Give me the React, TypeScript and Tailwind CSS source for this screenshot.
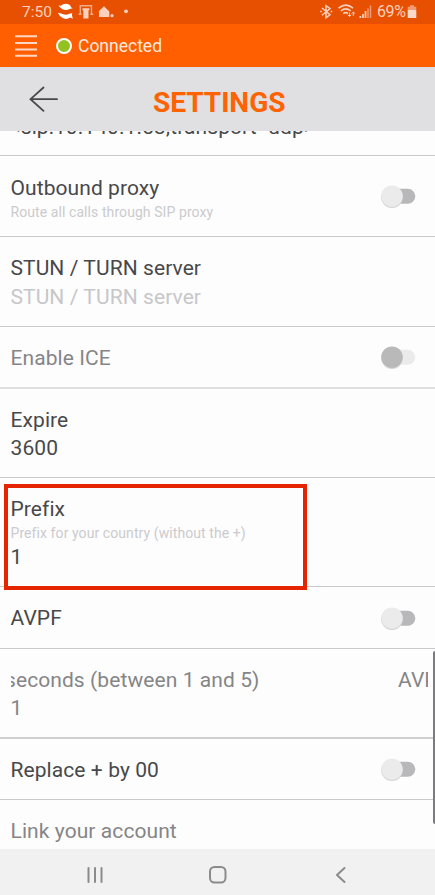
import type { ReactNode } from "react";

function Switch({ disabled = false }: { disabled?: boolean }) {
  return (
    <svg width="38" height="26" viewBox="0 0 38 26" className="shrink-0">
      <rect x="6" y="5.8" width="30.3" height="15" rx="7.5" fill={disabled ? "#ebebeb" : "#b8b8ba"} />
      <circle cx="13" cy="14.1" r="10.9" fill={disabled ? "#d6d6d6" : "#d2d2d2"} />
      <circle cx="13" cy="13.1" r="10.7" fill={disabled ? "#b9b9b9" : "#ebebeb"} />
    </svg>
  );
}

type RowProps = { height: string; border?: string; pad?: string; control?: ReactNode; children: ReactNode };

function Row({ height, border = "border-b border-[#c9c9cb]", pad = "pt-[17px]", control, children }: RowProps) {
  return (
    <div className={`flex shrink-0 justify-between pl-[10.5px] ${height} ${border}`}>
      <div className={`whitespace-nowrap ${pad}`}>{children}</div>
      {control && <div className="flex items-center pr-[18px]">{control}</div>}
    </div>
  );
}

const line = "text-[21px] leading-[28px] tracking-[0.08px]";
const dark = "text-[#48484a]";
const grey = "text-[#858587]";
const hint = "text-[14px] leading-[20px] tracking-[0.08px] text-[#cbcbcd]";

export default function App() {
  return (
    <div className="flex h-[895px] w-[435px] flex-col overflow-hidden bg-[#fdfdfd] font-['Roboto',sans-serif]">
      <div className="flex h-6 shrink-0 items-center justify-between bg-[#e65000] text-[#fbd0bd]">
        <div className="flex items-center pl-[22px]">
          <span className="w-[35px] text-[15.5px] leading-6">7:50</span>
          <svg width="75" height="24" viewBox="57 0 75 24">
            <path d="M58.500 5.500l2.200.3Q64.800 2.300 69 4.600q1.800 1 2.200 2.900l1.500.8-3 .6q-3.600 2.200-7.600.1Q60 7.700 58.500 5.500z" fill="#fff" />
            <path d="M57.800 12.800l3.400.8q4.300 2 8.300.1l2.800-.7-.4 1.800.9 4-2.700-1.200q-4.100 2.800-8.600-.3-1.800-1.200-3.700-4.500z" fill="#fff" />
            <path d="M78.500 14.200h3M80.300 14V5.800h11.200V14M90.300 14.200h3" fill="none" stroke="#f7ac8b" strokeWidth="1.400" />
            <path d="M82.500 8.300h6.800v2h-.8V18.500h-5.200V10.300h-.8z" fill="#fbd0bd" />
            <path d="M98.500 11.400l5.500-5.200 5.300 5.200v5.700h-10.300v-5.700z" fill="#fbd0bd" />
            <circle cx="112" cy="15.700" r="1.600" fill="#fbd0bd" />
            <circle cx="126" cy="11.300" r="1.900" fill="#fbd0bd" />
          </svg>
        </div>
        <div className="flex items-center pr-[18px]">
          <svg width="58" height="24" viewBox="319 0 58 24" fill="none" stroke="#fbd0bd">
            <path d="M322 8l8 6.800-4 2.900V5.600l4 2.900-8 6.800M320.200 11.600h1.600M330.600 11.600h1.600" strokeWidth="1.500" />
            <path d="M338.600 8.200q7.200-6 14.400 0M340.900 11q4.900-4.100 9.900 0M343.300 13.700q2.500-2 4.700-.2" strokeWidth="1.600" />
            <path d="M349.500 12.500v4m-1.700-1.700l1.700 1.800 1.700-1.800M353.300 16v-4m-1.600 1.700l1.600-1.800 1.600 1.800" strokeWidth="1" />
            <path d="M360.400 18v-2M363 18v-4M365.500 18v-7" strokeWidth="1.700" />
            <path d="M368 18V8.500M370.500 18V5.500" stroke="#f29b73" strokeWidth="1.500" />
          </svg>
          <span className="w-[30px] whitespace-nowrap text-[16px] leading-6 tracking-[-0.4px]">69%</span>
          <svg width="10" height="24" viewBox="0 0 10 24">
            <path d="M3 5.300h4v1.500h2.300V10H.700V6.800H3z" fill="#f29b73" />
            <path d="M.700 10h8.600v8H.700z" fill="#fbd9ca" />
          </svg>
        </div>
      </div>

      <div className="flex h-[43px] shrink-0 items-center bg-[#ff5f00] pl-[15px]">
        <svg width="22" height="24" viewBox="0 0 22 24" stroke="#fcd7c5" strokeWidth="1.900">
          <path d="M0 2.200h22M0 9h22M0 15.500h22M0 21.800h22" />
        </svg>
        <div className="ml-[19px] size-[16px] rounded-full border-2 border-white bg-[#93c11f]" />
        <span className="ml-[6px] mt-[1px] text-[17.500px] leading-[24px] text-[#ffe9df]">Connected</span>
      </div>

      <div className="flex h-16 shrink-0 items-center bg-[#e0e0e2] pl-[29px]">
        <svg width="30" height="26" viewBox="0 0 30 26" fill="none" stroke="#48484a" strokeWidth="1.800" strokeLinecap="round">
          <path d="M14.500 1.500L1.500 13.200l13 11.600M1.500 13.200H28" />
        </svg>
        <h1 className="ml-[94px] mt-[8px] text-[28px] font-bold leading-8 text-[#ff6200]">SETTINGS</h1>
      </div>

      <main className="relative flex h-[718px] shrink-0 flex-col overflow-hidden">
        <div className="flex h-[25px] shrink-0 items-start overflow-hidden border-b border-[#c9c9cb] pl-[10px]">
          <span className={`-mt-[18px] whitespace-nowrap ${line} ${dark}`}>&lt;sip:10.140.1.53;transport=udp&gt;</span>
        </div>
        <Row height="h-[81px]" pad="pt-[18px]" control={<Switch />}>
          <p className={`${line} ${dark}`}>Outbound proxy</p>
          <p className={hint}>Route all calls through SIP proxy</p>
        </Row>
        <Row height="h-[90px]">
          <p className={`${line} ${dark}`}>STUN / TURN server</p>
          <p className={`mt-px ${line} text-[#c7c7c9]`}>STUN / TURN server</p>
        </Row>
        <Row height="h-[62px]" border="border-b-2 border-[#dfdfe0]" control={<Switch disabled />}>
          <p className={`${line} ${grey}`}>Enable ICE</p>
        </Row>
        <Row height="h-[89px]">
          <p className={`${line} ${dark}`}>Expire</p>
          <p className={`${line} ${dark}`}>3600</p>
        </Row>
        <Row height="h-[109px]">
          <p className={`${line} ${dark}`}>Prefix</p>
          <p className={hint}>Prefix for your country (without the +)</p>
          <p className={`${line} ${dark}`}>1</p>
        </Row>
        <Row height="h-[62px]" control={<Switch />}>
          <p className={`${line} ${dark}`}>AVPF</p>
        </Row>
        <Row height="h-[90px]" border="border-b-2 border-[#cfcfd0]">
          <div className="flex w-[417.5px] justify-between overflow-hidden">
            <p className={`-ml-[5.5px] ${line} ${grey}`}>seconds (between 1 and 5)</p>
            <p className={`w-[30px] overflow-hidden ${line} ${grey}`}>AVPF</p>
          </div>
          <p className={`${line} ${grey}`}>1</p>
        </Row>
        <Row height="h-[61px]" control={<Switch />}>
          <p className={`${line} ${dark}`}>Replace + by 00</p>
        </Row>
        <Row height="h-[50px]" border="border-b border-[#ededed]">
          <p className={`${line} ${grey}`}>Link your account</p>
        </Row>
        <div className="absolute left-[4px] top-[353px] h-[106px] w-[303px] border-4 border-[#e52500]" />
        <div className="absolute right-0 top-[520px] h-[173px] w-[2px] rounded-l bg-[#7c7c7e]" />
      </main>

      <nav className="flex h-[46px] shrink-0 items-center bg-[#f1f1f1] pl-[86px] pt-[5px]">
        <svg width="18" height="18" viewBox="0 0 18 18" stroke="#8b8b8d" strokeWidth="2" strokeLinecap="round">
          <path d="M2.500 2v14M9 2v14M15.500 2v14" />
        </svg>
        <svg width="20" height="20" viewBox="0 0 20 20" className="ml-[104px]" fill="none" stroke="#8b8b8d" strokeWidth="2">
          <rect x="2" y="2" width="15.500" height="15.500" rx="4.500" />
        </svg>
        <svg width="14" height="20" viewBox="0 0 14 20" className="ml-[106px]" fill="none" stroke="#8b8b8d" strokeWidth="2" strokeLinecap="round" strokeLinejoin="round">
          <path d="M10.500 3L3 10l7.500 7" />
        </svg>
      </nav>
    </div>
  );
}
